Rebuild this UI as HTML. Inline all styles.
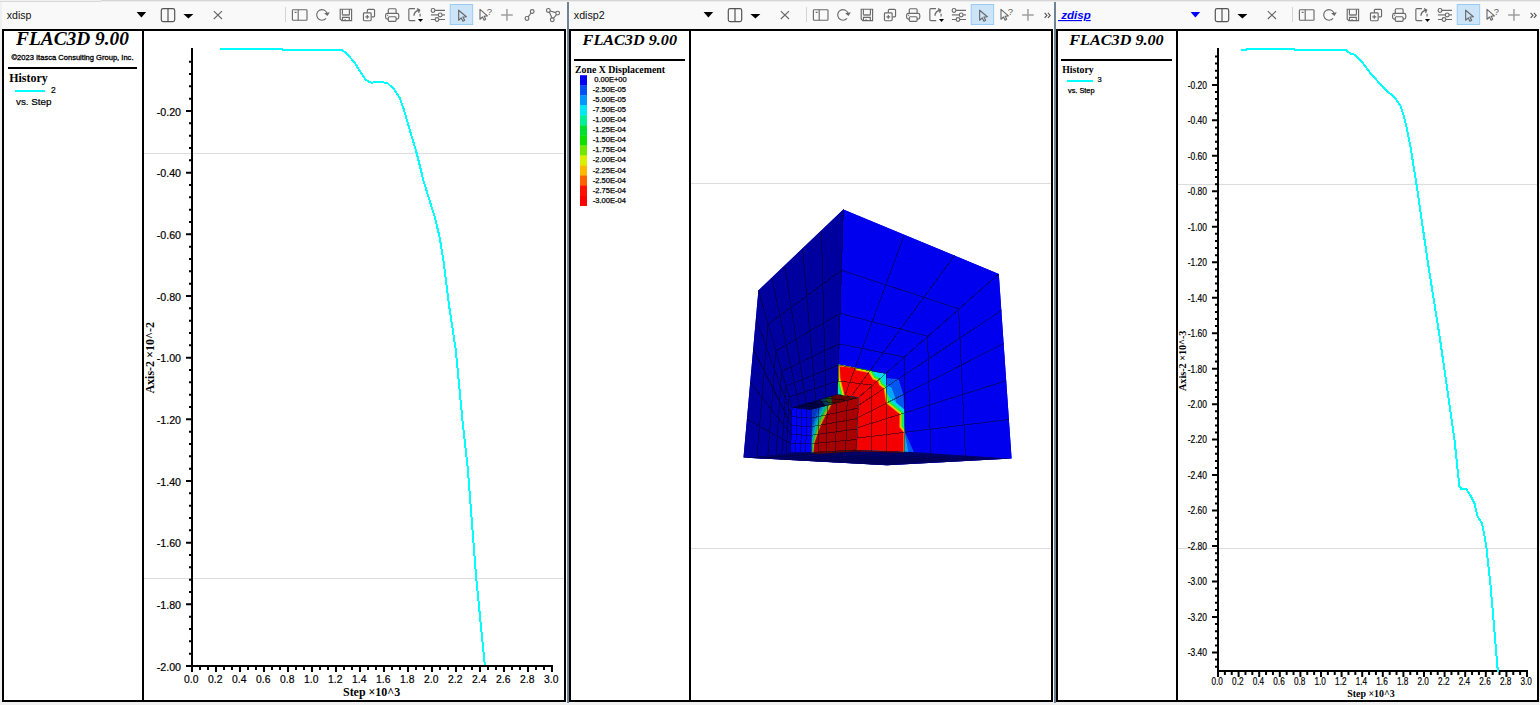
<!DOCTYPE html>
<html lang="en"><head><meta charset="utf-8"><title>FLAC3D 9.00 - plots</title>
<style>html,body{margin:0;padding:0;background:#f0f0f0;overflow:hidden}svg{display:block}text{white-space:pre}</style></head><body>
<svg width="1540" height="705" viewBox="0 0 1540 705">
<rect width="1540" height="705" fill="#f0f0f0"/>
<rect x="0" y="0" width="101" height="1" fill="#f0f0f0"/><rect x="0" y="1" width="101" height="1" fill="#d9d9d9"/>
<rect x="101" y="0" width="1439" height="1" fill="#d6d6d6"/><rect x="101" y="1" width="1439" height="1" fill="#ececec"/>
<rect x="0" y="2" width="1540" height="27" fill="#f9f9f9"/>
<rect x="0" y="2" width="2" height="703" fill="#f0f0f0"/>
<rect x="566" y="29" width="1" height="673" fill="#fff"/>
<rect x="567" y="2" width="2" height="701" fill="#708296"/>
<rect x="1053" y="29" width="1" height="673" fill="#fff"/>
<rect x="1054" y="2" width="2" height="701" fill="#708296"/>
<text x="6.8" y="18.6" font-size="11.4" font-family='"Liberation Sans", sans-serif' fill="#101010" textLength="24.7" lengthAdjust="spacingAndGlyphs">xdisp</text>
<path d="M136.6 12 h9.6 l-4.8 5.6z" fill="#000"/>
<rect x="161.3" y="8.6" width="13.4" height="13" rx="1.8" fill="none" stroke="#555" stroke-width="1.2"/>
<path d="M168.0 8.6v13" stroke="#555" stroke-width="1.2"/>
<path d="M183.4 14 h10 l-5 4.6z" fill="#000"/>
<path d="M213.8 11.2 l8.2 7.8 M222.0 11.2 l-8.2 7.8" stroke="#666" stroke-width="1.1" fill="none"/>
<path d="M285.5 7v15" stroke="#d4d4d4" stroke-width="1"/>
<g fill="none" stroke="#6a6a6a" stroke-width="1.15"><rect x="292.40000000000003" y="9.7" width="14.6" height="10.5" rx="0.8"/><path d="M298.20000000000005 9.7v10.5M294.70000000000005 12.3h1.9"/></g>
<path d="M326.06 18.31A5.3 5.3 0 1 1 327.01 13.17" fill="none" stroke="#6a6a6a" stroke-width="1.15"/><path d="M324.10 13.3l5.7-1.1l-2.3 3.9z" fill="#6a6a6a"/>
<g fill="none" stroke="#6a6a6a" stroke-width="1.15"><path d="M340.20000000000005 9.2h11.4v11.4h-9.8l-1.6-1.6z"/><path d="M342.40000000000003 9.2v5.4h7v-5.4"/><path d="M342.50000000000006 20.6v-3.3h6.8v3.3M344.40000000000003 19.7h1.4"/></g><rect x="342.40000000000003" y="14.1" width="7" height="1.9" fill="#9a9a9a"/>
<g fill="none" stroke="#6a6a6a" stroke-width="1.15"><path d="M367.35 12.7v-2.4a0.9 0.9 0 0 1 0.9-0.9h5.4a0.9 0.9 0 0 1 0.9 0.9v5.6a0.9 0.9 0 0 1 -0.9 0.9h-2"/><rect x="363.45" y="12.9" width="7.7" height="7.8" rx="0.9"/><path d="M367.3 14.9v3.8M365.40000000000003 16.8h3.8"/></g>
<g fill="none" stroke="#6a6a6a" stroke-width="1.15"><path d="M388.30000000000007 13.3v-3.6a1 1 0 0 1 1-1h5.8a1 1 0 0 1 1 1v3.6"/><rect x="385.6" y="13.3" width="13.2" height="5.8" rx="1.9"/><rect x="388.30000000000007" y="16.7" width="7.8" height="4.6" rx="1" fill="#f9f9f9"/><path d="M387.00000000000006 15.2h1.2"/></g>
<g fill="none" stroke="#6a6a6a" stroke-width="1.15"><path d="M414.95000000000005 8.6h-5.1a1 1 0 0 0 -1 1v10a1 1 0 0 0 1 1h5.4"/><path d="M413.90000000000003 15.8c0.3-3.2 2-5 5.2-5.8M416.95000000000005 8.6l2.7 1.5l-1.1 2.6" stroke-width="1.3"/><path d="M420.1 13.8v2.6" stroke-width="1.5" stroke="#888"/></g>
<path d="M418.0 19h5l-2.5 3z" fill="#000"/>
<g fill="none" stroke="#6a6a6a" stroke-width="1.15"><path d="M433.1 10.4h11.9M430.9 19.45h4.6M438.1 19.45h6.9" /><path d="M430.9 14.9h7.4M442.1 14.9h2.9" stroke="#9a9a9a" stroke-width="1.7"/><circle cx="433.0" cy="10.4" r="1.9" fill="#f9f9f9"/><circle cx="440.2" cy="14.9" r="1.9" fill="#f9f9f9"/><circle cx="437.0" cy="19.45" r="1.9" fill="#f9f9f9"/></g>
<rect x="450.25" y="4.5" width="22.4" height="20" fill="#cce4f7" stroke="#99ccf5" stroke-width="1"/>
<path d="M458.65 10.2v10l2.6-2.3l1.7 3.3l1.7-0.9l-1.7-3.2l3.4-0.3z" fill="none" stroke="#6a6a6a" stroke-width="1.15" stroke-linejoin="round"/>
<path d="M480.0 9.4v9.8l2.5-2.2l1.6 3.2l1.6-0.9l-1.6-3.1l3.3-0.3z" fill="none" stroke="#6a6a6a" stroke-width="1.15" stroke-linejoin="round"/>
<text x="486.8" y="14.8" font-size="9.5" font-family='"Liberation Sans", sans-serif' fill="#606060">?</text>
<path d="M501.15000000000003 14.9h11.6M506.95000000000005 9.1v11.6" stroke="#9e9e9e" stroke-width="1.5" fill="none"/>
<g fill="none" stroke="#6a6a6a" stroke-width="1.15"><path d="M528.2 16.8l2.8-3.8"/><circle cx="527.0" cy="18.4" r="1.9"/><circle cx="532.2" cy="11.5" r="1.9"/></g>
<g fill="none" stroke="#6a6a6a" stroke-width="1.15"><path d="M550.15 11l5.6 1.6M556.45 14.6l-3.2 3.9M552.05 18.2l-2.7-6.2"/><circle cx="548.35" cy="10.4" r="1.9"/><circle cx="557.65" cy="13.1" r="1.9"/><circle cx="552.25" cy="19.7" r="1.9"/></g>
<text x="573.8" y="18.6" font-size="11.4" font-family='"Liberation Sans", sans-serif' fill="#101010" textLength="30.9" lengthAdjust="spacingAndGlyphs">xdisp2</text>
<path d="M703.6 12 h9.6 l-4.8 5.6z" fill="#000"/>
<rect x="728.3" y="8.6" width="13.4" height="13" rx="1.8" fill="none" stroke="#555" stroke-width="1.2"/>
<path d="M735.0 8.6v13" stroke="#555" stroke-width="1.2"/>
<path d="M750.4 14 h10 l-5 4.6z" fill="#000"/>
<path d="M780.8 11.2 l8.2 7.8 M789.0 11.2 l-8.2 7.8" stroke="#666" stroke-width="1.1" fill="none"/>
<path d="M806.5 7v15" stroke="#d4d4d4" stroke-width="1"/>
<g fill="none" stroke="#6a6a6a" stroke-width="1.15"><rect x="813.4" y="9.7" width="14.6" height="10.5" rx="0.8"/><path d="M819.2 9.7v10.5M815.7 12.3h1.9"/></g>
<path d="M847.06 18.31A5.3 5.3 0 1 1 848.01 13.17" fill="none" stroke="#6a6a6a" stroke-width="1.15"/><path d="M845.10 13.3l5.7-1.1l-2.3 3.9z" fill="#6a6a6a"/>
<g fill="none" stroke="#6a6a6a" stroke-width="1.15"><path d="M861.1999999999999 9.2h11.4v11.4h-9.8l-1.6-1.6z"/><path d="M863.4 9.2v5.4h7v-5.4"/><path d="M863.5 20.6v-3.3h6.8v3.3M865.4 19.7h1.4"/></g><rect x="863.4" y="14.1" width="7" height="1.9" fill="#9a9a9a"/>
<g fill="none" stroke="#6a6a6a" stroke-width="1.15"><path d="M888.3499999999999 12.7v-2.4a0.9 0.9 0 0 1 0.9-0.9h5.4a0.9 0.9 0 0 1 0.9 0.9v5.6a0.9 0.9 0 0 1 -0.9 0.9h-2"/><rect x="884.4499999999999" y="12.9" width="7.7" height="7.8" rx="0.9"/><path d="M888.3 14.9v3.8M886.4 16.8h3.8"/></g>
<g fill="none" stroke="#6a6a6a" stroke-width="1.15"><path d="M909.3000000000001 13.3v-3.6a1 1 0 0 1 1-1h5.8a1 1 0 0 1 1 1v3.6"/><rect x="906.6" y="13.3" width="13.2" height="5.8" rx="1.9"/><rect x="909.3000000000001" y="16.7" width="7.8" height="4.6" rx="1" fill="#f9f9f9"/><path d="M908.0 15.2h1.2"/></g>
<g fill="none" stroke="#6a6a6a" stroke-width="1.15"><path d="M935.95 8.6h-5.1a1 1 0 0 0 -1 1v10a1 1 0 0 0 1 1h5.4"/><path d="M934.9 15.8c0.3-3.2 2-5 5.2-5.8M937.95 8.6l2.7 1.5l-1.1 2.6" stroke-width="1.3"/><path d="M941.1 13.8v2.6" stroke-width="1.5" stroke="#888"/></g>
<path d="M939.0 19h5l-2.5 3z" fill="#000"/>
<g fill="none" stroke="#6a6a6a" stroke-width="1.15"><path d="M954.1 10.4h11.9M951.9 19.45h4.6M959.1 19.45h6.9" /><path d="M951.9 14.9h7.4M963.1 14.9h2.9" stroke="#9a9a9a" stroke-width="1.7"/><circle cx="954.0" cy="10.4" r="1.9" fill="#f9f9f9"/><circle cx="961.2" cy="14.9" r="1.9" fill="#f9f9f9"/><circle cx="958.0" cy="19.45" r="1.9" fill="#f9f9f9"/></g>
<rect x="971.25" y="4.5" width="22.4" height="20" fill="#cce4f7" stroke="#99ccf5" stroke-width="1"/>
<path d="M979.65 10.2v10l2.6-2.3l1.7 3.3l1.7-0.9l-1.7-3.2l3.4-0.3z" fill="none" stroke="#6a6a6a" stroke-width="1.15" stroke-linejoin="round"/>
<path d="M1001.0 9.4v9.8l2.5-2.2l1.6 3.2l1.6-0.9l-1.6-3.1l3.3-0.3z" fill="none" stroke="#6a6a6a" stroke-width="1.15" stroke-linejoin="round"/>
<text x="1007.8" y="14.8" font-size="9.5" font-family='"Liberation Sans", sans-serif' fill="#606060">?</text>
<path d="M1022.1500000000001 14.9h11.6M1027.95 9.1v11.6" stroke="#9e9e9e" stroke-width="1.5" fill="none"/>
<path d="M1044.6 12.9l2.3 2.5l-2.3 2.5M1047.8999999999999 12.9l2.3 2.5l-2.3 2.5" fill="none" stroke="#555" stroke-width="1.15"/>
<text x="1058" y="19" font-size="11.5" font-family='"Liberation Sans", sans-serif' font-weight="bold" font-style="italic" fill="#0000ff" textLength="32.7" lengthAdjust="spacingAndGlyphs" text-decoration="underline"> zdisp</text>
<path d="M1190.6 12 h9.6 l-4.8 5.6z" fill="#0000ff"/>
<rect x="1215.3" y="8.6" width="13.4" height="13" rx="1.8" fill="none" stroke="#555" stroke-width="1.2"/>
<path d="M1222.0 8.6v13" stroke="#555" stroke-width="1.2"/>
<path d="M1237.4 14 h10 l-5 4.6z" fill="#000"/>
<path d="M1267.8 11.2 l8.2 7.8 M1276.0 11.2 l-8.2 7.8" stroke="#666" stroke-width="1.1" fill="none"/>
<path d="M1292.5 7v15" stroke="#d4d4d4" stroke-width="1"/>
<g fill="none" stroke="#6a6a6a" stroke-width="1.15"><rect x="1299.3999999999999" y="9.7" width="14.6" height="10.5" rx="0.8"/><path d="M1305.1999999999998 9.7v10.5M1301.6999999999998 12.3h1.9"/></g>
<path d="M1333.06 18.31A5.3 5.3 0 1 1 1334.01 13.17" fill="none" stroke="#6a6a6a" stroke-width="1.15"/><path d="M1331.10 13.3l5.7-1.1l-2.3 3.9z" fill="#6a6a6a"/>
<g fill="none" stroke="#6a6a6a" stroke-width="1.15"><path d="M1347.1999999999998 9.2h11.4v11.4h-9.8l-1.6-1.6z"/><path d="M1349.3999999999999 9.2v5.4h7v-5.4"/><path d="M1349.4999999999998 20.6v-3.3h6.8v3.3M1351.3999999999999 19.7h1.4"/></g><rect x="1349.3999999999999" y="14.1" width="7" height="1.9" fill="#9a9a9a"/>
<g fill="none" stroke="#6a6a6a" stroke-width="1.15"><path d="M1374.35 12.7v-2.4a0.9 0.9 0 0 1 0.9-0.9h5.4a0.9 0.9 0 0 1 0.9 0.9v5.6a0.9 0.9 0 0 1 -0.9 0.9h-2"/><rect x="1370.45" y="12.9" width="7.7" height="7.8" rx="0.9"/><path d="M1374.3 14.9v3.8M1372.3999999999999 16.8h3.8"/></g>
<g fill="none" stroke="#6a6a6a" stroke-width="1.15"><path d="M1395.2999999999997 13.3v-3.6a1 1 0 0 1 1-1h5.8a1 1 0 0 1 1 1v3.6"/><rect x="1392.6" y="13.3" width="13.2" height="5.8" rx="1.9"/><rect x="1395.2999999999997" y="16.7" width="7.8" height="4.6" rx="1" fill="#f9f9f9"/><path d="M1393.9999999999998 15.2h1.2"/></g>
<g fill="none" stroke="#6a6a6a" stroke-width="1.15"><path d="M1421.9499999999998 8.6h-5.1a1 1 0 0 0 -1 1v10a1 1 0 0 0 1 1h5.4"/><path d="M1420.8999999999999 15.8c0.3-3.2 2-5 5.2-5.8M1423.9499999999998 8.6l2.7 1.5l-1.1 2.6" stroke-width="1.3"/><path d="M1427.1 13.8v2.6" stroke-width="1.5" stroke="#888"/></g>
<path d="M1425.0 19h5l-2.5 3z" fill="#000"/>
<g fill="none" stroke="#6a6a6a" stroke-width="1.15"><path d="M1440.1 10.4h11.9M1437.9 19.45h4.6M1445.1 19.45h6.9" /><path d="M1437.9 14.9h7.4M1449.1 14.9h2.9" stroke="#9a9a9a" stroke-width="1.7"/><circle cx="1440.0" cy="10.4" r="1.9" fill="#f9f9f9"/><circle cx="1447.2" cy="14.9" r="1.9" fill="#f9f9f9"/><circle cx="1444.0" cy="19.45" r="1.9" fill="#f9f9f9"/></g>
<rect x="1457.2499999999998" y="4.5" width="22.4" height="20" fill="#cce4f7" stroke="#99ccf5" stroke-width="1"/>
<path d="M1465.6499999999999 10.2v10l2.6-2.3l1.7 3.3l1.7-0.9l-1.7-3.2l3.4-0.3z" fill="none" stroke="#6a6a6a" stroke-width="1.15" stroke-linejoin="round"/>
<path d="M1487.0 9.4v9.8l2.5-2.2l1.6 3.2l1.6-0.9l-1.6-3.1l3.3-0.3z" fill="none" stroke="#6a6a6a" stroke-width="1.15" stroke-linejoin="round"/>
<text x="1493.8" y="14.8" font-size="9.5" font-family='"Liberation Sans", sans-serif' fill="#606060">?</text>
<path d="M1508.1499999999999 14.9h11.6M1513.9499999999998 9.1v11.6" stroke="#9e9e9e" stroke-width="1.5" fill="none"/>
<path d="M1530.6 12.9l2.3 2.5l-2.3 2.5M1533.8999999999999 12.9l2.3 2.5l-2.3 2.5" fill="none" stroke="#555" stroke-width="1.15"/>
<rect x="2" y="29" width="564" height="673" fill="#000"/>
<rect x="4" y="31" width="138" height="669" fill="#fff"/>
<rect x="144" y="31" width="420" height="669" fill="#fff"/>
<rect x="569" y="29" width="484" height="673" fill="#000"/>
<rect x="571" y="31" width="118" height="669" fill="#fff"/>
<rect x="691" y="31" width="360" height="669" fill="#fff"/>
<rect x="1056" y="29" width="483" height="673" fill="#000"/>
<rect x="1058" y="31" width="118" height="669" fill="#fff"/>
<rect x="1178" y="31" width="359" height="669" fill="#fff"/>
<rect x="144" y="153" width="420" height="1" fill="#dcdcdc"/>
<rect x="144" y="578" width="420" height="1" fill="#dcdcdc"/>
<rect x="691" y="183" width="360" height="1" fill="#dcdcdc"/>
<rect x="691" y="548" width="360" height="1" fill="#dcdcdc"/>
<rect x="1178" y="184" width="359" height="1" fill="#dcdcdc"/>
<rect x="1178" y="548" width="359" height="1" fill="#dcdcdc"/>
<text x="72.5" y="45.4" font-size="17.8" font-family='"Liberation Serif", serif' font-weight="bold" font-style="italic" text-anchor="middle" textLength="113" lengthAdjust="spacingAndGlyphs">FLAC3D 9.00</text>
<text x="72.5" y="60.3" font-size="7.6" font-family='"Liberation Sans", sans-serif' text-anchor="middle" textLength="122" lengthAdjust="spacingAndGlyphs" stroke="#000" stroke-width="0.3">©2023 Itasca Consulting Group, Inc.</text>
<rect x="8" y="67" width="129" height="2" fill="#000"/>
<text x="9.2" y="82.2" font-size="12" font-family='"Liberation Serif", serif' font-weight="bold" textLength="38.5" lengthAdjust="spacingAndGlyphs">History</text>
<rect x="15" y="90" width="30" height="2" fill="#00ffff"/>
<text x="51" y="93" font-size="8.5" font-family='"Liberation Sans", sans-serif' stroke="#000" stroke-width="0.2">2</text>
<text x="16" y="105" font-size="9" font-family='"Liberation Sans", sans-serif' textLength="35.5" lengthAdjust="spacingAndGlyphs" stroke="#000" stroke-width="0.2">vs. Step</text>
<polyline points="220.2,49.1 282.3,49.1 283.0,49.9 341.9,49.9 346.9,53.8 354.8,62.8 360.8,72.7 365.7,79.6 369.0,81.8 371.7,82.8 375.7,82.0 381.6,82.0 387.6,83.2 393.5,88.6 399.5,97.5 403.5,108.4 408.4,125.3 416.4,152.1 423.8,181.8 434.9,217.6 439.7,237.5 443.6,261.4 449.6,309.1 455.6,348.9 459.5,388.7 462.8,424.0 467.7,467.7 471.7,519.4 476.3,579.1 484.8,665.0" fill="none" stroke="#00ffff" stroke-width="2" stroke-linejoin="round" shape-rendering="crispEdges"/>
<rect x="191" y="48" width="2" height="619" fill="#000"/>
<rect x="186" y="665" width="367" height="2" fill="#000"/>
<path d="M189 61.63h2M189 73.97h2M189 86.30h2M189 98.64h2M186 110.97h5M189 123.30h2M189 135.64h2M189 147.97h2M189 160.31h2M186 172.64h5M189 184.97h2M189 197.31h2M189 209.64h2M189 221.98h2M186 234.31h5M189 246.64h2M189 258.98h2M189 271.31h2M189 283.65h2M186 295.98h5M189 308.31h2M189 320.65h2M189 332.98h2M189 345.32h2M186 357.65h5M189 369.98h2M189 382.32h2M189 394.65h2M189 406.99h2M186 419.32h5M189 431.65h2M189 443.99h2M189 456.32h2M189 468.66h2M186 480.99h5M189 493.32h2M189 505.66h2M189 517.99h2M189 530.33h2M186 542.66h5M189 554.99h2M189 567.33h2M189 579.66h2M189 592.00h2M186 604.33h5M189 616.66h2M189 629.00h2M189 641.33h2M189 653.67h2" stroke="#000" stroke-width="2" fill="none"/>
<text x="181" y="115.5" font-size="11.2" font-family='"Liberation Sans", sans-serif' text-anchor="end" textLength="24.3" lengthAdjust="spacingAndGlyphs" stroke="#000" stroke-width="0.2">-0.20</text>
<text x="181" y="177.2" font-size="11.2" font-family='"Liberation Sans", sans-serif' text-anchor="end" textLength="24.3" lengthAdjust="spacingAndGlyphs" stroke="#000" stroke-width="0.2">-0.40</text>
<text x="181" y="238.8" font-size="11.2" font-family='"Liberation Sans", sans-serif' text-anchor="end" textLength="24.3" lengthAdjust="spacingAndGlyphs" stroke="#000" stroke-width="0.2">-0.60</text>
<text x="181" y="300.5" font-size="11.2" font-family='"Liberation Sans", sans-serif' text-anchor="end" textLength="24.3" lengthAdjust="spacingAndGlyphs" stroke="#000" stroke-width="0.2">-0.80</text>
<text x="181" y="362.2" font-size="11.2" font-family='"Liberation Sans", sans-serif' text-anchor="end" textLength="24.3" lengthAdjust="spacingAndGlyphs" stroke="#000" stroke-width="0.2">-1.00</text>
<text x="181" y="423.9" font-size="11.2" font-family='"Liberation Sans", sans-serif' text-anchor="end" textLength="24.3" lengthAdjust="spacingAndGlyphs" stroke="#000" stroke-width="0.2">-1.20</text>
<text x="181" y="485.5" font-size="11.2" font-family='"Liberation Sans", sans-serif' text-anchor="end" textLength="24.3" lengthAdjust="spacingAndGlyphs" stroke="#000" stroke-width="0.2">-1.40</text>
<text x="181" y="547.2" font-size="11.2" font-family='"Liberation Sans", sans-serif' text-anchor="end" textLength="24.3" lengthAdjust="spacingAndGlyphs" stroke="#000" stroke-width="0.2">-1.60</text>
<text x="181" y="608.9" font-size="11.2" font-family='"Liberation Sans", sans-serif' text-anchor="end" textLength="24.3" lengthAdjust="spacingAndGlyphs" stroke="#000" stroke-width="0.2">-1.80</text>
<text x="181" y="670.5" font-size="11.2" font-family='"Liberation Sans", sans-serif' text-anchor="end" textLength="24.3" lengthAdjust="spacingAndGlyphs" stroke="#000" stroke-width="0.2">-2.00</text>
<path d="M192.00 667v5M200.00 667v3M208.00 667v3M216.00 667v5M224.00 667v3M232.00 667v3M240.00 667v5M248.00 667v3M256.00 667v3M264.00 667v5M272.00 667v3M280.00 667v3M288.00 667v5M296.00 667v3M304.00 667v3M312.00 667v5M320.00 667v3M328.00 667v3M336.00 667v5M344.00 667v3M352.00 667v3M360.00 667v5M368.00 667v3M376.00 667v3M384.00 667v5M392.00 667v3M400.00 667v3M408.00 667v5M416.00 667v3M424.00 667v3M432.00 667v5M440.00 667v3M448.00 667v3M456.00 667v5M464.00 667v3M472.00 667v3M480.00 667v5M488.00 667v3M496.00 667v3M504.00 667v5M512.00 667v3M520.00 667v3M528.00 667v5M536.00 667v3M544.00 667v3M552.00 667v5" stroke="#000" stroke-width="2" fill="none"/>
<text x="191.2" y="682.5" font-size="11.2" font-family='"Liberation Sans", sans-serif' text-anchor="middle" textLength="14.4" lengthAdjust="spacingAndGlyphs" stroke="#000" stroke-width="0.2">0.0</text>
<text x="215.2" y="682.5" font-size="11.2" font-family='"Liberation Sans", sans-serif' text-anchor="middle" textLength="14.4" lengthAdjust="spacingAndGlyphs" stroke="#000" stroke-width="0.2">0.2</text>
<text x="239.2" y="682.5" font-size="11.2" font-family='"Liberation Sans", sans-serif' text-anchor="middle" textLength="14.4" lengthAdjust="spacingAndGlyphs" stroke="#000" stroke-width="0.2">0.4</text>
<text x="263.2" y="682.5" font-size="11.2" font-family='"Liberation Sans", sans-serif' text-anchor="middle" textLength="14.4" lengthAdjust="spacingAndGlyphs" stroke="#000" stroke-width="0.2">0.6</text>
<text x="287.2" y="682.5" font-size="11.2" font-family='"Liberation Sans", sans-serif' text-anchor="middle" textLength="14.4" lengthAdjust="spacingAndGlyphs" stroke="#000" stroke-width="0.2">0.8</text>
<text x="311.2" y="682.5" font-size="11.2" font-family='"Liberation Sans", sans-serif' text-anchor="middle" textLength="14.4" lengthAdjust="spacingAndGlyphs" stroke="#000" stroke-width="0.2">1.0</text>
<text x="335.2" y="682.5" font-size="11.2" font-family='"Liberation Sans", sans-serif' text-anchor="middle" textLength="14.4" lengthAdjust="spacingAndGlyphs" stroke="#000" stroke-width="0.2">1.2</text>
<text x="359.2" y="682.5" font-size="11.2" font-family='"Liberation Sans", sans-serif' text-anchor="middle" textLength="14.4" lengthAdjust="spacingAndGlyphs" stroke="#000" stroke-width="0.2">1.4</text>
<text x="383.2" y="682.5" font-size="11.2" font-family='"Liberation Sans", sans-serif' text-anchor="middle" textLength="14.4" lengthAdjust="spacingAndGlyphs" stroke="#000" stroke-width="0.2">1.6</text>
<text x="407.2" y="682.5" font-size="11.2" font-family='"Liberation Sans", sans-serif' text-anchor="middle" textLength="14.4" lengthAdjust="spacingAndGlyphs" stroke="#000" stroke-width="0.2">1.8</text>
<text x="431.2" y="682.5" font-size="11.2" font-family='"Liberation Sans", sans-serif' text-anchor="middle" textLength="14.4" lengthAdjust="spacingAndGlyphs" stroke="#000" stroke-width="0.2">2.0</text>
<text x="455.2" y="682.5" font-size="11.2" font-family='"Liberation Sans", sans-serif' text-anchor="middle" textLength="14.4" lengthAdjust="spacingAndGlyphs" stroke="#000" stroke-width="0.2">2.2</text>
<text x="479.2" y="682.5" font-size="11.2" font-family='"Liberation Sans", sans-serif' text-anchor="middle" textLength="14.4" lengthAdjust="spacingAndGlyphs" stroke="#000" stroke-width="0.2">2.4</text>
<text x="503.2" y="682.5" font-size="11.2" font-family='"Liberation Sans", sans-serif' text-anchor="middle" textLength="14.4" lengthAdjust="spacingAndGlyphs" stroke="#000" stroke-width="0.2">2.6</text>
<text x="527.2" y="682.5" font-size="11.2" font-family='"Liberation Sans", sans-serif' text-anchor="middle" textLength="14.4" lengthAdjust="spacingAndGlyphs" stroke="#000" stroke-width="0.2">2.8</text>
<text x="551.2" y="682.5" font-size="11.2" font-family='"Liberation Sans", sans-serif' text-anchor="middle" textLength="14.4" lengthAdjust="spacingAndGlyphs" stroke="#000" stroke-width="0.2">3.0</text>
<text x="371.6" y="695.7" font-size="12" font-family='"Liberation Serif", serif' font-weight="bold" text-anchor="middle" textLength="57.2" lengthAdjust="spacingAndGlyphs">Step ×10^3</text>
<g transform="translate(154.3 357.8) rotate(-90)">
<text x="0" y="0" font-size="12" font-family='"Liberation Serif", serif' font-weight="bold" text-anchor="middle" textLength="71.5" lengthAdjust="spacingAndGlyphs">Axis-2 ×10^-2</text>
</g>
<text x="1116.5" y="44.9" font-size="15" font-family='"Liberation Serif", serif' font-weight="bold" font-style="italic" text-anchor="middle" textLength="94.4" lengthAdjust="spacingAndGlyphs">FLAC3D 9.00</text>
<rect x="1061" y="59" width="111" height="2" fill="#000"/>
<text x="1062.2" y="73" font-size="10" font-family='"Liberation Serif", serif' font-weight="bold" textLength="31.5" lengthAdjust="spacingAndGlyphs">History</text>
<rect x="1067" y="80" width="26" height="2" fill="#00ffff"/>
<text x="1097.5" y="82.2" font-size="7.5" font-family='"Liberation Sans", sans-serif' stroke="#000" stroke-width="0.2">3</text>
<text x="1068" y="93" font-size="7.5" font-family='"Liberation Sans", sans-serif' textLength="26.5" lengthAdjust="spacingAndGlyphs" stroke="#000" stroke-width="0.25">vs. Step</text>
<rect x="1217" y="48" width="2" height="624" fill="#000"/>
<rect x="1217" y="670" width="311" height="2" fill="#000"/>
<path d="M1215 56.49h2M1215 63.59h2M1215 70.69h2M1215 77.78h2M1212 84.88h5M1215 91.97h2M1215 99.06h2M1215 106.16h2M1215 113.25h2M1212 120.35h5M1215 127.44h2M1215 134.54h2M1215 141.64h2M1215 148.73h2M1212 155.83h5M1215 162.92h2M1215 170.02h2M1215 177.11h2M1215 184.21h2M1212 191.30h5M1215 198.40h2M1215 205.49h2M1215 212.59h2M1215 219.68h2M1212 226.78h5M1215 233.87h2M1215 240.97h2M1215 248.06h2M1215 255.16h2M1212 262.25h5M1215 269.35h2M1215 276.44h2M1215 283.54h2M1215 290.63h2M1212 297.73h5M1215 304.82h2M1215 311.92h2M1215 319.01h2M1215 326.11h2M1212 333.20h5M1215 340.30h2M1215 347.39h2M1215 354.49h2M1215 361.58h2M1212 368.68h5M1215 375.77h2M1215 382.87h2M1215 389.96h2M1215 397.06h2M1212 404.15h5M1215 411.25h2M1215 418.34h2M1215 425.44h2M1215 432.53h2M1212 439.62h5M1215 446.72h2M1215 453.81h2M1215 460.91h2M1215 468.00h2M1212 475.10h5M1215 482.19h2M1215 489.29h2M1215 496.38h2M1215 503.48h2M1212 510.58h5M1215 517.67h2M1215 524.77h2M1215 531.86h2M1215 538.96h2M1212 546.05h5M1215 553.15h2M1215 560.24h2M1215 567.34h2M1215 574.43h2M1212 581.52h5M1215 588.62h2M1215 595.72h2M1215 602.81h2M1215 609.90h2M1212 617.00h5M1215 624.10h2M1215 631.19h2M1215 638.29h2M1215 645.38h2M1212 652.48h5M1215 659.57h2M1215 666.67h2" stroke="#000" stroke-width="2" fill="none"/>
<text x="1207" y="88.7" font-size="10.3" font-family='"Liberation Sans", sans-serif' text-anchor="end" textLength="19.2" lengthAdjust="spacingAndGlyphs" stroke="#000" stroke-width="0.2">-0.20</text>
<text x="1207" y="124.2" font-size="10.3" font-family='"Liberation Sans", sans-serif' text-anchor="end" textLength="19.2" lengthAdjust="spacingAndGlyphs" stroke="#000" stroke-width="0.2">-0.40</text>
<text x="1207" y="159.6" font-size="10.3" font-family='"Liberation Sans", sans-serif' text-anchor="end" textLength="19.2" lengthAdjust="spacingAndGlyphs" stroke="#000" stroke-width="0.2">-0.60</text>
<text x="1207" y="195.1" font-size="10.3" font-family='"Liberation Sans", sans-serif' text-anchor="end" textLength="19.2" lengthAdjust="spacingAndGlyphs" stroke="#000" stroke-width="0.2">-0.80</text>
<text x="1207" y="230.6" font-size="10.3" font-family='"Liberation Sans", sans-serif' text-anchor="end" textLength="19.2" lengthAdjust="spacingAndGlyphs" stroke="#000" stroke-width="0.2">-1.00</text>
<text x="1207" y="266.1" font-size="10.3" font-family='"Liberation Sans", sans-serif' text-anchor="end" textLength="19.2" lengthAdjust="spacingAndGlyphs" stroke="#000" stroke-width="0.2">-1.20</text>
<text x="1207" y="301.5" font-size="10.3" font-family='"Liberation Sans", sans-serif' text-anchor="end" textLength="19.2" lengthAdjust="spacingAndGlyphs" stroke="#000" stroke-width="0.2">-1.40</text>
<text x="1207" y="337.0" font-size="10.3" font-family='"Liberation Sans", sans-serif' text-anchor="end" textLength="19.2" lengthAdjust="spacingAndGlyphs" stroke="#000" stroke-width="0.2">-1.60</text>
<text x="1207" y="372.5" font-size="10.3" font-family='"Liberation Sans", sans-serif' text-anchor="end" textLength="19.2" lengthAdjust="spacingAndGlyphs" stroke="#000" stroke-width="0.2">-1.80</text>
<text x="1207" y="408.0" font-size="10.3" font-family='"Liberation Sans", sans-serif' text-anchor="end" textLength="19.2" lengthAdjust="spacingAndGlyphs" stroke="#000" stroke-width="0.2">-2.00</text>
<text x="1207" y="443.4" font-size="10.3" font-family='"Liberation Sans", sans-serif' text-anchor="end" textLength="19.2" lengthAdjust="spacingAndGlyphs" stroke="#000" stroke-width="0.2">-2.20</text>
<text x="1207" y="478.9" font-size="10.3" font-family='"Liberation Sans", sans-serif' text-anchor="end" textLength="19.2" lengthAdjust="spacingAndGlyphs" stroke="#000" stroke-width="0.2">-2.40</text>
<text x="1207" y="514.4" font-size="10.3" font-family='"Liberation Sans", sans-serif' text-anchor="end" textLength="19.2" lengthAdjust="spacingAndGlyphs" stroke="#000" stroke-width="0.2">-2.60</text>
<text x="1207" y="549.9" font-size="10.3" font-family='"Liberation Sans", sans-serif' text-anchor="end" textLength="19.2" lengthAdjust="spacingAndGlyphs" stroke="#000" stroke-width="0.2">-2.80</text>
<text x="1207" y="585.3" font-size="10.3" font-family='"Liberation Sans", sans-serif' text-anchor="end" textLength="19.2" lengthAdjust="spacingAndGlyphs" stroke="#000" stroke-width="0.2">-3.00</text>
<text x="1207" y="620.8" font-size="10.3" font-family='"Liberation Sans", sans-serif' text-anchor="end" textLength="19.2" lengthAdjust="spacingAndGlyphs" stroke="#000" stroke-width="0.2">-3.20</text>
<text x="1207" y="656.3" font-size="10.3" font-family='"Liberation Sans", sans-serif' text-anchor="end" textLength="19.2" lengthAdjust="spacingAndGlyphs" stroke="#000" stroke-width="0.2">-3.40</text>
<path d="M1218.00 672v5M1224.87 672v3M1231.73 672v3M1238.60 672v5M1245.47 672v3M1252.33 672v3M1259.20 672v5M1266.07 672v3M1272.93 672v3M1279.80 672v5M1286.67 672v3M1293.53 672v3M1300.40 672v5M1307.27 672v3M1314.13 672v3M1321.00 672v5M1327.87 672v3M1334.73 672v3M1341.60 672v5M1348.47 672v3M1355.33 672v3M1362.20 672v5M1369.07 672v3M1375.93 672v3M1382.80 672v5M1389.67 672v3M1396.53 672v3M1403.40 672v5M1410.27 672v3M1417.13 672v3M1424.00 672v5M1430.87 672v3M1437.73 672v3M1444.60 672v5M1451.47 672v3M1458.33 672v3M1465.20 672v5M1472.07 672v3M1478.93 672v3M1485.80 672v5M1492.67 672v3M1499.53 672v3M1506.40 672v5M1513.27 672v3M1520.13 672v3M1527.00 672v5" stroke="#000" stroke-width="2" fill="none"/>
<text x="1217.2" y="685" font-size="10.3" font-family='"Liberation Sans", sans-serif' text-anchor="middle" textLength="11.4" lengthAdjust="spacingAndGlyphs" stroke="#000" stroke-width="0.2">0.0</text>
<text x="1237.8" y="685" font-size="10.3" font-family='"Liberation Sans", sans-serif' text-anchor="middle" textLength="11.4" lengthAdjust="spacingAndGlyphs" stroke="#000" stroke-width="0.2">0.2</text>
<text x="1258.4" y="685" font-size="10.3" font-family='"Liberation Sans", sans-serif' text-anchor="middle" textLength="11.4" lengthAdjust="spacingAndGlyphs" stroke="#000" stroke-width="0.2">0.4</text>
<text x="1279.0" y="685" font-size="10.3" font-family='"Liberation Sans", sans-serif' text-anchor="middle" textLength="11.4" lengthAdjust="spacingAndGlyphs" stroke="#000" stroke-width="0.2">0.6</text>
<text x="1299.6" y="685" font-size="10.3" font-family='"Liberation Sans", sans-serif' text-anchor="middle" textLength="11.4" lengthAdjust="spacingAndGlyphs" stroke="#000" stroke-width="0.2">0.8</text>
<text x="1320.2" y="685" font-size="10.3" font-family='"Liberation Sans", sans-serif' text-anchor="middle" textLength="11.4" lengthAdjust="spacingAndGlyphs" stroke="#000" stroke-width="0.2">1.0</text>
<text x="1340.8" y="685" font-size="10.3" font-family='"Liberation Sans", sans-serif' text-anchor="middle" textLength="11.4" lengthAdjust="spacingAndGlyphs" stroke="#000" stroke-width="0.2">1.2</text>
<text x="1361.4" y="685" font-size="10.3" font-family='"Liberation Sans", sans-serif' text-anchor="middle" textLength="11.4" lengthAdjust="spacingAndGlyphs" stroke="#000" stroke-width="0.2">1.4</text>
<text x="1382.0" y="685" font-size="10.3" font-family='"Liberation Sans", sans-serif' text-anchor="middle" textLength="11.4" lengthAdjust="spacingAndGlyphs" stroke="#000" stroke-width="0.2">1.6</text>
<text x="1402.6" y="685" font-size="10.3" font-family='"Liberation Sans", sans-serif' text-anchor="middle" textLength="11.4" lengthAdjust="spacingAndGlyphs" stroke="#000" stroke-width="0.2">1.8</text>
<text x="1423.2" y="685" font-size="10.3" font-family='"Liberation Sans", sans-serif' text-anchor="middle" textLength="11.4" lengthAdjust="spacingAndGlyphs" stroke="#000" stroke-width="0.2">2.0</text>
<text x="1443.8" y="685" font-size="10.3" font-family='"Liberation Sans", sans-serif' text-anchor="middle" textLength="11.4" lengthAdjust="spacingAndGlyphs" stroke="#000" stroke-width="0.2">2.2</text>
<text x="1464.4" y="685" font-size="10.3" font-family='"Liberation Sans", sans-serif' text-anchor="middle" textLength="11.4" lengthAdjust="spacingAndGlyphs" stroke="#000" stroke-width="0.2">2.4</text>
<text x="1485.0" y="685" font-size="10.3" font-family='"Liberation Sans", sans-serif' text-anchor="middle" textLength="11.4" lengthAdjust="spacingAndGlyphs" stroke="#000" stroke-width="0.2">2.6</text>
<text x="1505.6" y="685" font-size="10.3" font-family='"Liberation Sans", sans-serif' text-anchor="middle" textLength="11.4" lengthAdjust="spacingAndGlyphs" stroke="#000" stroke-width="0.2">2.8</text>
<text x="1526.2" y="685" font-size="10.3" font-family='"Liberation Sans", sans-serif' text-anchor="middle" textLength="11.4" lengthAdjust="spacingAndGlyphs" stroke="#000" stroke-width="0.2">3.0</text>
<polyline points="1241.2,49.9 1246.0,49.9 1246.8,49.1 1294.0,49.1 1294.8,49.9 1346.1,49.9 1350.0,53.4 1355.0,54.8 1361.9,61.8 1370.9,73.7 1379.8,83.6 1387.8,91.6 1394.7,97.5 1400.7,106.4 1403.6,115.4 1406.6,127.3 1410.6,147.2 1414.0,169.0 1416.6,185.0 1427.7,261.4 1439.7,337.0 1451.7,420.0 1454.5,440.0 1457.2,465.5 1459.3,485.9 1461.5,489.3 1463.5,488.6 1466.1,489.0 1470.8,496.1 1474.6,503.8 1477.6,516.5 1481.9,523.3 1484.4,535.2 1486.5,548.2 1490.7,587.0 1497.9,672.0" fill="none" stroke="#00ffff" stroke-width="2" stroke-linejoin="round" shape-rendering="crispEdges"/>
<text x="1371" y="696.6" font-size="10" font-family='"Liberation Serif", serif' font-weight="bold" text-anchor="middle" textLength="47.5" lengthAdjust="spacingAndGlyphs">Step ×10^3</text>
<g transform="translate(1186 360.8) rotate(-90)">
<text x="0" y="0" font-size="10" font-family='"Liberation Serif", serif' font-weight="bold" text-anchor="middle" textLength="60.4" lengthAdjust="spacingAndGlyphs">Axis-2 ×10^-3</text>
</g>
<text x="629.8" y="44.9" font-size="15" font-family='"Liberation Serif", serif' font-weight="bold" font-style="italic" text-anchor="middle" textLength="94.4" lengthAdjust="spacingAndGlyphs">FLAC3D 9.00</text>
<rect x="574" y="59" width="111" height="2" fill="#000"/>
<text x="575" y="73.2" font-size="10" font-family='"Liberation Serif", serif' font-weight="bold" textLength="90" lengthAdjust="spacingAndGlyphs">Zone X Displacement</text>
<rect x="580" y="75.20" width="7" height="10.4" fill="#0000f4"/>
<text x="594.2" y="82.2" font-size="7.6" font-family='"Liberation Sans", sans-serif' textLength="32.6" lengthAdjust="spacingAndGlyphs" stroke="#000" stroke-width="0.25">0.00E+00</text>
<rect x="580" y="85.23" width="7" height="10.4" fill="#0050f4"/>
<text x="592.8" y="92.2" font-size="7.6" font-family='"Liberation Sans", sans-serif' textLength="33.2" lengthAdjust="spacingAndGlyphs" stroke="#000" stroke-width="0.25">-2.50E-05</text>
<rect x="580" y="95.26" width="7" height="10.4" fill="#0098ff"/>
<text x="592.8" y="102.3" font-size="7.6" font-family='"Liberation Sans", sans-serif' textLength="33.2" lengthAdjust="spacingAndGlyphs" stroke="#000" stroke-width="0.25">-5.00E-05</text>
<rect x="580" y="105.29" width="7" height="10.4" fill="#00e8f8"/>
<text x="592.8" y="112.3" font-size="7.6" font-family='"Liberation Sans", sans-serif' textLength="33.2" lengthAdjust="spacingAndGlyphs" stroke="#000" stroke-width="0.25">-7.50E-05</text>
<rect x="580" y="115.32" width="7" height="10.4" fill="#00f098"/>
<text x="592.8" y="122.3" font-size="7.6" font-family='"Liberation Sans", sans-serif' textLength="33.2" lengthAdjust="spacingAndGlyphs" stroke="#000" stroke-width="0.25">-1.00E-04</text>
<rect x="580" y="125.35" width="7" height="10.4" fill="#00e030"/>
<text x="592.8" y="132.3" font-size="7.6" font-family='"Liberation Sans", sans-serif' textLength="33.2" lengthAdjust="spacingAndGlyphs" stroke="#000" stroke-width="0.25">-1.25E-04</text>
<rect x="580" y="135.38" width="7" height="10.4" fill="#10e000"/>
<text x="592.8" y="142.4" font-size="7.6" font-family='"Liberation Sans", sans-serif' textLength="33.2" lengthAdjust="spacingAndGlyphs" stroke="#000" stroke-width="0.25">-1.50E-04</text>
<rect x="580" y="145.41" width="7" height="10.4" fill="#70e800"/>
<text x="592.8" y="152.4" font-size="7.6" font-family='"Liberation Sans", sans-serif' textLength="33.2" lengthAdjust="spacingAndGlyphs" stroke="#000" stroke-width="0.25">-1.75E-04</text>
<rect x="580" y="155.44" width="7" height="10.4" fill="#d8f000"/>
<text x="592.8" y="162.4" font-size="7.6" font-family='"Liberation Sans", sans-serif' textLength="33.2" lengthAdjust="spacingAndGlyphs" stroke="#000" stroke-width="0.25">-2.00E-04</text>
<rect x="580" y="165.47" width="7" height="10.4" fill="#ffb800"/>
<text x="592.8" y="172.5" font-size="7.6" font-family='"Liberation Sans", sans-serif' textLength="33.2" lengthAdjust="spacingAndGlyphs" stroke="#000" stroke-width="0.25">-2.25E-04</text>
<rect x="580" y="175.50" width="7" height="10.4" fill="#ff6000"/>
<text x="592.8" y="182.5" font-size="7.6" font-family='"Liberation Sans", sans-serif' textLength="33.2" lengthAdjust="spacingAndGlyphs" stroke="#000" stroke-width="0.25">-2.50E-04</text>
<rect x="580" y="185.53" width="7" height="10.4" fill="#ff1000"/>
<text x="592.8" y="192.5" font-size="7.6" font-family='"Liberation Sans", sans-serif' textLength="33.2" lengthAdjust="spacingAndGlyphs" stroke="#000" stroke-width="0.25">-2.75E-04</text>
<rect x="580" y="195.56" width="7" height="10.4" fill="#ff0000"/>
<text x="592.8" y="202.6" font-size="7.6" font-family='"Liberation Sans", sans-serif' textLength="33.2" lengthAdjust="spacingAndGlyphs" stroke="#000" stroke-width="0.25">-3.00E-04</text>
<polygon points="743.5,457.6 790.6,452.7 856.6,449.9 904.4,451.0 1011.6,458.5 887.0,465.2" fill="#000066"/>
<polygon points="758.4,290.4 843.3,209.5 998.8,273.9 1011.6,458.5 887.0,465.2 743.5,457.6" fill="#0000ee"/>
<polygon points="743.5,457.6 790.6,452.7 856.6,449.9 904.4,451.0 1011.6,458.5 887.0,465.2" fill="#000066"/>
<polygon points="758.4,290.4 843.3,209.5 843.8,209.5 838.1,394.6 837.6,394.6 792.1,407.6 790.6,452.7 743.5,457.6" fill="#00009e"/>
<polygon points="843.3,209.5 998.8,273.9 1011.6,458.5 904.4,451.6 856.6,449.9 858.6,397.5 837.6,394.6" fill="#0000ee"/>
<polygon points="792.1,407.6 811.0,409.6 811.0,452.4 790.6,452.7" fill="#0000ff"/>
<defs><linearGradient id="gb" gradientUnits="userSpaceOnUse" x1="811" y1="0" x2="830" y2="0"><stop offset="0" stop-color="#0030c8"/><stop offset="0.25" stop-color="#0078c8"/><stop offset="0.45" stop-color="#00b080"/><stop offset="0.6" stop-color="#60b000"/><stop offset="0.75" stop-color="#c06000"/><stop offset="0.9" stop-color="#a80000"/></linearGradient><clipPath id="cb"><polygon points="811.0,409.6 858.6,397.5 856.6,449.9 811.0,452.4"/></clipPath><clipPath id="cr"><polygon points="843.3,209.5 998.8,273.9 1011.6,458.5 904.4,451.6 856.6,449.9 858.6,397.5 837.6,394.6"/></clipPath></defs>
<polygon points="811.0,409.6 858.6,397.5 856.6,449.9 811.0,452.4" fill="#0038c0"/>
<polygon points="820.5,402.5 813.2,419.7 811.2,426.8 809.6,443.0 809.9,453.5 862.0,453.5 862.0,395.0" fill="#0050c8" clip-path="url(#cb)"/>
<polygon points="823.0,402.5 815.3,419.7 813.1,426.8 810.6,443.0 810.6,453.5 862.0,453.5 862.0,395.0" fill="#0088d0" clip-path="url(#cb)"/>
<polygon points="825.5,402.5 817.4,419.7 815.0,426.8 811.6,443.0 811.4,453.5 862.0,453.5 862.0,395.0" fill="#00b8b0" clip-path="url(#cb)"/>
<polygon points="827.6,402.5 819.2,419.7 816.6,426.8 812.4,443.0 812.0,453.5 862.0,453.5 862.0,395.0" fill="#10b850" clip-path="url(#cb)"/>
<polygon points="829.6,402.5 820.9,419.7 818.1,426.8 813.2,443.0 812.6,453.5 862.0,453.5 862.0,395.0" fill="#70c010" clip-path="url(#cb)"/>
<polygon points="831.2,402.5 822.3,419.7 819.2,426.8 813.9,443.0 813.1,453.5 862.0,453.5 862.0,395.0" fill="#c8a000" clip-path="url(#cb)"/>
<polygon points="832.3,402.5 823.2,419.7 820.1,426.8 814.3,443.0 813.4,453.5 862.0,453.5 862.0,395.0" fill="#c04000" clip-path="url(#cb)"/>
<polygon points="833.0,402.5 823.8,419.7 820.6,426.8 814.6,443.0 813.6,453.5 862.0,453.5 862.0,395.0" fill="#a80000" clip-path="url(#cb)"/>
<polygon points="792.1,407.6 837.6,394.6 858.6,397.5 811.0,409.6" fill="#000048"/>
<polygon points="820.5,399.4 837.6,394.6 858.6,397.5 825.5,405.8" fill="#003850"/>
<polygon points="825.5,398.0 837.6,394.6 858.6,397.5 829.5,404.8" fill="#1c5018"/>
<polygon points="831.0,396.5 837.6,394.6 858.6,397.5 832.5,404.0" fill="#600000"/>
<clipPath id="cw"><polygon points="837.0,364.3 886.1,373.4 886.1,392.0 889.5,397.0 904.6,409.5 904.6,452.5 837.0,452.5"/></clipPath>
<g clip-path="url(#cr)">
<polygon points="886.1,377.9 898.6,379.3 903.5,394.7 904.4,411.6 905.0,431.7 914.0,452.4 903.0,452.0 886.1,403.0" fill="#0058f0"/>
<polygon points="886.1,384.8 891.6,387.8 894.6,395.7 897.6,409.0 903.8,413.5 904.4,431.5 908.4,452.2 903.0,452.0 886.1,403.0" fill="#00a8ff"/>
<g clip-path="url(#cw)">
<polygon points="837.0,364.3 886.1,373.4 886.1,392.0 889.5,397.0 904.6,409.5 904.6,452.5 837.0,452.5" fill="#00d8f0"/>
<polyline points="844.8,396.2 843.6,391.0 840.4,378.0 839.8,366.4 854.4,367.9 856.4,370.4 868.8,372.9 872.7,379.4 877.7,381.3 879.2,385.3 883.7,388.8 886.1,403.2 899.5,414.1 899.4,427.2 903.4,432.0 903.5,452.0" fill="none" stroke="#00f090" stroke-width="9.0" stroke-linejoin="round"/>
<polyline points="844.8,396.2 843.6,391.0 840.4,378.0 839.8,366.4 854.4,367.9 856.4,370.4 868.8,372.9 872.7,379.4 877.7,381.3 879.2,385.3 883.7,388.8 886.1,403.2 899.5,414.1 899.4,427.2 903.4,432.0 903.5,452.0" fill="none" stroke="#30e810" stroke-width="6.4" stroke-linejoin="round"/>
<polyline points="844.8,396.2 843.6,391.0 840.4,378.0 839.8,366.4 854.4,367.9 856.4,370.4 868.8,372.9 872.7,379.4 877.7,381.3 879.2,385.3 883.7,388.8 886.1,403.2 899.5,414.1 899.4,427.2 903.4,432.0 903.5,452.0" fill="none" stroke="#d0f000" stroke-width="4.0" stroke-linejoin="round"/>
<polyline points="844.8,396.2 843.6,391.0 840.4,378.0 839.8,366.4 854.4,367.9 856.4,370.4 868.8,372.9 872.7,379.4 877.7,381.3 879.2,385.3 883.7,388.8 886.1,403.2 899.5,414.1 899.4,427.2 903.4,432.0 903.5,452.0" fill="none" stroke="#ff9000" stroke-width="2.0" stroke-linejoin="round"/>
<polygon points="844.8,396.2 843.6,391.0 840.4,378.0 839.8,366.4 854.4,367.9 856.4,370.4 868.8,372.9 872.7,379.4 877.7,381.3 879.2,385.3 883.7,388.8 886.1,403.2 899.5,414.1 899.4,427.2 903.4,432.0 903.5,452.0 856.6,449.9 858.6,397.5 844.9,395.5" fill="#f40000"/>
</g></g>
<polygon points="813.4,452.6 856.6,449.9 903.5,451.6 903.5,452.8 856.6,451.6 813.4,454.0" fill="#5a0000"/>
<path d="M841.4 270.3L958.6 308.7L965.4 455.9M840.1 313.3L927.6 336.3L930.7 454.0M839.2 343.8L904.1 357.1L904.4 452.5M838.5 365.0L886.1 373.6L886.3 451.5M838.0 381.0L871.8 385.0L871.8 450.7M998.8 273.9L858.6 397.5M904.1 235.4L844.9 395.5M954.7 255.3L851.4 396.1M1002.3 310.0L857.6 406.0M1003.9 343.5L857.3 417.9M1006.3 380.7L857.0 427.9M1009.1 419.5L856.7 438.2M843.3 209.5L837.6 394.6M841.4 270.3L768.1 324.3L757.1 456.2M840.1 313.3L775.8 351.0L767.9 455.1M839.2 343.8L781.7 371.3L776.0 454.2M838.5 365.0L785.9 386.0L781.9 453.6M838.0 381.0L789.1 397.1L786.4 453.1M758.4 290.4L792.1 407.6M771.8 277.9L799.3 405.5M784.7 265.6L806.2 403.6M802.6 248.7L815.8 400.8M821.4 231.8L825.9 398.0M755.9 318.8L791.8 416.6M753.2 348.9L791.5 425.6M750.2 382.4L791.2 434.7M746.9 419.1L790.9 443.7M792.1 407.6L790.6 452.7M796.8 408.1L795.7 452.6M801.5 408.6L800.8 452.5M806.3 409.1L805.9 452.5M811.0 409.6L811.0 452.4M792.1 407.6L811.0 409.6M791.8 416.6L811.0 418.2M791.5 425.6L811.0 426.7M791.2 434.7L811.0 435.3M790.9 443.7L811.0 443.8M790.6 452.7L811.0 452.4M818.6 407.7L818.3 452.0M827.2 405.5L826.5 451.5M836.7 403.1L835.6 451.0M847.2 400.4L845.7 450.5M858.6 397.5L856.6 449.9M811.0 418.2L858.2 408.0M811.0 426.7L857.8 418.5M811.0 435.3L857.4 428.9M811.0 443.8L857.0 439.4M811.0 452.4L856.6 449.9M792.1 407.6L837.6 394.6M837.6 394.6L858.6 397.5M811.0 409.6L858.6 397.5M818.6 407.7L800.9 405.1M827.2 405.5L808.3 403.0M836.7 403.1L816.5 400.6M847.2 400.4L825.5 398.1" fill="none" stroke="#000018" stroke-opacity="0.5" stroke-width="1" shape-rendering="crispEdges"/>
<path d="M760.7 458.5L815.8 453.4M779.4 459.5L843.1 454.1M798.0 460.5L870.4 454.8M815.2 461.4L895.6 455.5M832.5 462.3L920.8 456.1M851.1 463.3L948.1 456.8M869.8 464.3L975.4 457.5" fill="none" stroke="#000020" stroke-opacity="0.5" stroke-width="0.7"/>
</svg></body></html>
